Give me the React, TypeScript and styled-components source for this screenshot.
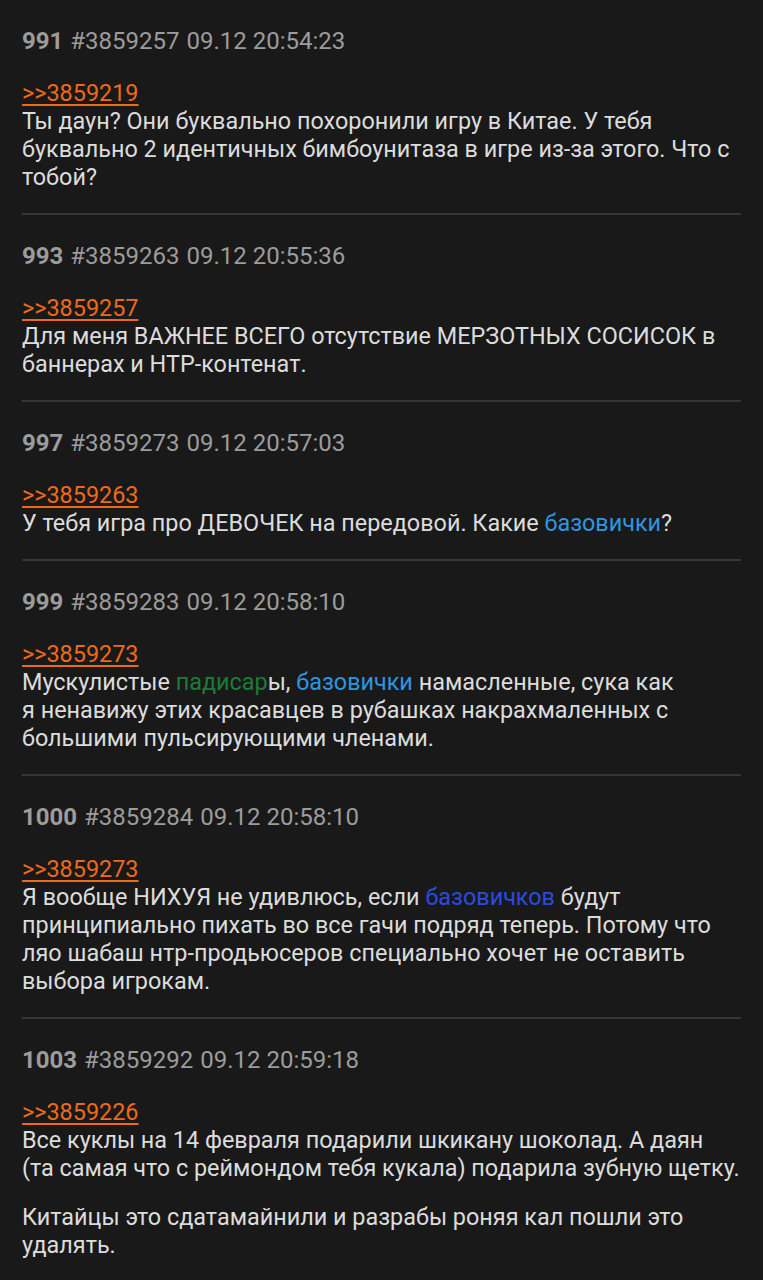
import React from "react";
import styled, { createGlobalStyle } from "styled-components";

const Global = createGlobalStyle`
  html, body { margin: 0; padding: 0; background: #191919; }
  body { font-family: Roboto, "Noto Sans", sans-serif; -webkit-font-smoothing: antialiased; }
`;

const Page = styled.div`
  background: #191919;
  min-height: 1280px;
  padding: 26px 22px 0 22px;
  box-sizing: border-box;
`;

const Post = styled.div`
  padding: 0 0 22px 0;
  margin-bottom: 26px;
  border-bottom: 2px solid #363636;
  &:last-child { border-bottom: none; }
`;

const Header = styled.div`
  font-size: 24px;
  line-height: 30px;
  color: #9c9c9c;
  display: flex;
  gap: 7px;
  margin-bottom: 23px;
`;

const Num = styled.span`
  font-weight: 700;
`;

const Body = styled.div`
  font-size: 23.4px;
  line-height: 28px;
  color: #dcdcdc;
  margin-right: -4px;
`;

const Para = styled.p`
  margin: 0 0 21px 0;
  &:last-child { margin-bottom: 0; }
`;

const Reply = styled.a`
  color: #ee6a1a;
  text-decoration: underline;
  text-underline-offset: 3px;
  display: inline-block;
`;

const Mark = styled.span<{ $c: string }>`
  color: ${(p) => p.$c};
`;

const LB = "#2f95e0";
const DB = "#2a4be0";
const GR = "#1e7a38";

type P = { n: string; id: string; date: string; reply: string; paras: React.ReactNode[] };

const posts: P[] = [
  {
    n: "991", id: "#3859257", date: "09.12 20:54:23", reply: ">>3859219",
    paras: ["Ты даун? Они буквально похоронили игру в Китае. У тебя буквально 2 идентичных бимбоунитаза в игре из-за этого. Что с тобой?"],
  },
  {
    n: "993", id: "#3859263", date: "09.12 20:55:36", reply: ">>3859257",
    paras: ["Для меня ВАЖНЕЕ ВСЕГО отсутствие МЕРЗОТНЫХ СОСИСОК в баннерах и НТР-контенат."],
  },
  {
    n: "997", id: "#3859273", date: "09.12 20:57:03", reply: ">>3859263",
    paras: [<>У тебя игра про ДЕВОЧЕК на передовой. Какие <Mark $c={LB}>базовички</Mark>?</>],
  },
  {
    n: "999", id: "#3859283", date: "09.12 20:58:10", reply: ">>3859273",
    paras: [<>Мускулистые <Mark $c={GR}>падисар</Mark>ы, <Mark $c={LB}>базовички</Mark> намасленные, сука как<br />я ненавижу этих красавцев в рубашках накрахмаленных с большими пульсирующими членами.</>],
  },
  {
    n: "1000", id: "#3859284", date: "09.12 20:58:10", reply: ">>3859273",
    paras: [<>Я вообще НИХУЯ не удивлюсь, если <Mark $c={DB}>базовичков</Mark> будут принципиально пихать во все гачи подряд теперь. Потому что ляо шабаш нтр-продьюсеров специально хочет не оставить выбора игрокам.</>],
  },
  {
    n: "1003", id: "#3859292", date: "09.12 20:59:18", reply: ">>3859226",
    paras: [
      <>Все куклы на 14 февраля подарили шкикану шоколад. А даян<br />(та самая что с реймондом тебя кукала) подарила зубную щетку.</>,
      "Китайцы это сдатамайнили и разрабы роняя кал пошли это удалять.",
    ],
  },
];

export default function App() {
  return (
    <>
      <Global />
      <Page>
        {posts.map((p) => (
          <Post key={p.id}>
            <Header>
              <Num>{p.n}</Num>
              <span>{p.id}</span>
              <span>{p.date}</span>
            </Header>
            <Body>
              <Reply>{p.reply}</Reply>
              {p.paras.map((t, i) => (
                <Para key={i}>{t}</Para>
              ))}
            </Body>
          </Post>
        ))}
      </Page>
    </>
  );
}
